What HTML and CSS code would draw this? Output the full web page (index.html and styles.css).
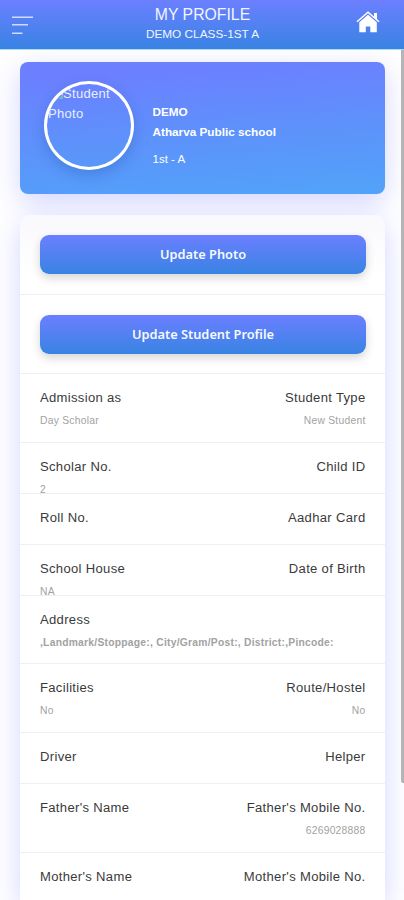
FILE: index.html
```
<!DOCTYPE html>
<html lang="en">
<head>
<meta charset="utf-8">
<title>My Profile</title>
<link rel="stylesheet" href="styles.css">
</head>
<body>
<header class="topbar">
  <svg class="menu" viewBox="0 0 22 20" width="22" height="20"><path d="M0 2.2H21M0 9.7H16M0 18.2H10.5" fill="none" stroke="#cfdcff" stroke-width="1.5"/></svg>
  <div class="heading"><h1>MY PROFILE</h1><p>DEMO CLASS-1ST A</p></div>
  <svg class="home" viewBox="0 0 24 22" width="24" height="22"><path d="M12 3.8L3.3 11.3V21.3H9.8V15.5H14.3V21.3H20.8V11.3Z" fill="#fff"/><path d="M1 10.8L12 1.2L23 10.8" fill="none" stroke="#fff" stroke-width="1.5"/><path d="M18 2H21V8.6L18 6Z" fill="#fff"/></svg>
</header>
<main class="content">
  <section class="student">
    <div class="photo"><svg class="broken" viewBox="0 0 15 14" width="15" height="14"><path d="M11 10L15 7V11H10Z" fill="#79b7bb"/><path d="M12 5L15 7" stroke="#dce8ff"/></svg>Student<br>Photo</div>
    <div class="about"><b>DEMO</b><b>Atharva Public school</b><span>1st - A</span></div>
  </section>
  <section class="details">
    <div class="action"><button>Update Photo</button></div>
    <div class="action"><button>Update Student Profile</button></div>
    <div class="row first"><div><h2>Admission as</h2><p>Day Scholar</p></div><div><h2>Student Type</h2><p>New Student</p></div></div>
    <div class="row"><div><h2>Scholar No.</h2><p>2</p></div><div><h2>Child ID</h2></div></div>
    <div class="row"><div><h2>Roll No.</h2></div><div><h2>Aadhar Card</h2></div></div>
    <div class="row"><div><h2>School House</h2><p>NA</p></div><div><h2>Date of Birth</h2></div></div>
    <div class="row tall"><div><h2>Address</h2><p class="address">,Landmark/Stoppage:, City/Gram/Post:, District:,Pincode:</p></div></div>
    <div class="row tall"><div><h2>Facilities</h2><p>No</p></div><div><h2>Route/Hostel</h2><p>No</p></div></div>
    <div class="row"><div><h2>Driver</h2></div><div><h2>Helper</h2></div></div>
    <div class="row tall"><div><h2>Father's Name</h2></div><div><h2>Father's Mobile No.</h2><p>6269028888</p></div></div>
    <div class="row last"><div><h2>Mother's Name</h2></div><div><h2>Mother's Mobile No.</h2></div></div>
  </section>
</main>
<div class="scrollbar"></div>
</body>
</html>
```
FILE: styles.css
```
* { box-sizing: border-box; }
body { margin: 0; height: 900px; overflow: hidden; position: relative; background: #fff; color: #3a3a3a; font-family: "Liberation Sans", Arial, sans-serif; }
h1, h2, p { margin: 0; font-weight: 400; }
.topbar { height: 50px; padding: 0 24px 0 12px; display: grid; grid-template-columns: 24px 1fr 24px; align-items: center; background: linear-gradient(#6c7fff, #3883e3); border-bottom: 1px solid #a9dcf5; color: #f2f5ff; }
.home { margin-top: -5px; }
.heading { text-align: center; padding-left: 13px; margin-top: -2px; }
.heading h1 { font-size: 15.8px; line-height: 20px; }
.heading p { font-size: 11.8px; line-height: 18px; }
.content { height: 850px; overflow: hidden; padding: 12px 19px 0 20px; }
.student { height: 132px; border-radius: 8px; display: flex; padding: 19px 24px; background: linear-gradient(176deg, #6c7fff 10%, #5d92fb 55%, #51a3f8 100%); box-shadow: 0 8px 28px rgba(108, 117, 255, .3); color: #fff; }
.photo { width: 90px; height: 89px; border: 3px solid #fff; border-radius: 50%; overflow: hidden; font-size: 13px; line-height: 20px; letter-spacing: .3px; color: #e9efff; box-shadow: 0 5px 14px rgba(0, 40, 130, .2); white-space: nowrap; padding-left: 1px; }
.broken { vertical-align: -4px; }
.about { margin: 21.4px 0 0 18.5px; display: flex; flex-direction: column; font-size: 11.75px; line-height: 19.5px; }
.about span { margin-top: 9px; font-size: 11.5px; }
.details { margin-top: 21px; height: 685px; border-radius: 10px 10px 0 0; background: linear-gradient(#f9f9fd, #fff 60px); box-shadow: 0 8px 28px rgba(108, 117, 255, .3); }
.action { height: 79.6px; padding: 20px 19px 0 20px; border-bottom: 1px solid #eeeff0; }
.action button { display: block; width: 100%; height: 39px; border: 0; border-radius: 9px; padding: 0 0 1px; background: linear-gradient(#6c7fff, #3883e3); box-shadow: 0 4px 10px rgba(0, 0, 0, .17); color: #f7f9ff; font: 600 12.8px/20px "Noto Sans", "Open Sans", sans-serif; }
.row { height: 51px; padding: 13.8px 19.5px 0 20px; display: flex; justify-content: space-between; border-bottom: 1px solid #eeeff0; }
.row.first { height: 68.6px; }
.row.tall { height: 68.7px; }
.row.last { height: 47px; border-bottom: 0; }
.row div + div { text-align: right; }
.row h2 { font-size: 13.05px; line-height: 20px; letter-spacing: .32px; }
.row p { margin-top: 3px; font-size: 10.3px; line-height: 20px; letter-spacing: .25px; color: #a2a2a2; }
.row .address { font-weight: 700; white-space: nowrap; letter-spacing: .25px; }
.scrollbar { position: absolute; top: 50px; right: 0; width: 3px; height: 733px; background: #b4b4b6; border-radius: 0 0 0 2px; }
```
